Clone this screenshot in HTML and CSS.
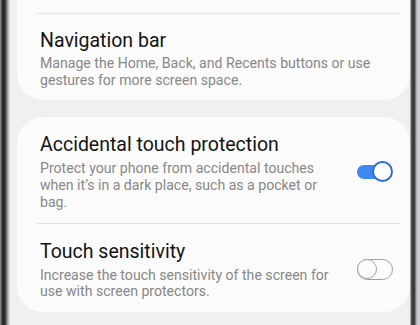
FILE: index.html
```html
<!DOCTYPE html>
<html lang="en">
<head>
<meta charset="utf-8">
<title>Settings</title>
<link rel="stylesheet" href="styles.css">
</head>
<body>
<div class="device">
  <div class="bezel bezel-left"></div>
  <main class="screen">
    <section class="card card-first">
      <div class="divider"></div>
      <div class="row">
        <div class="text">
          <div class="title">Navigation bar</div>
          <div class="desc wide">Manage the Home, Back, and Recents buttons or use gestures for more screen space.</div>
        </div>
      </div>
    </section>
    <section class="card">
      <div class="row">
        <div class="text">
          <div class="title">Accidental touch protection</div>
          <div class="desc">Protect your phone from accidental touches when it’s in a dark place, such as a pocket or bag.</div>
        </div>
        <div class="switch on"><span class="knob"></span></div>
      </div>
      <div class="divider"></div>
      <div class="row">
        <div class="text">
          <div class="title">Touch sensitivity</div>
          <div class="desc">Increase the touch sensitivity of the screen for use with screen protectors.</div>
        </div>
        <div class="switch off"><span class="knob"></span></div>
      </div>
    </section>
  </main>
  <div class="bezel bezel-right"></div>
</div>
</body>
</html>
```

FILE: styles.css
```css
html, body {
  margin: 0;
  padding: 0;
  width: 420px;
  height: 325px;
  overflow: hidden;
  background: #f0f0f0;
  font-family: Roboto, "Noto Sans", sans-serif;
}

.device {
  display: flex;
  height: 325px;
}

.bezel {
  flex: none;
  height: 100%;
}

.bezel-left {
  width: 10px;
  background: linear-gradient(to right, #9a9a9a 0px, #3a3a3a 2px, #1e1e1e 4px, #555 6px, #b5b5b5 8px, #e8e8e8 10px);
}

.bezel-right {
  width: 10px;
  background: linear-gradient(to right, #d8d8dc 0px, #6a6a70 1px, #2a2a30 3px, #50505a 5px, #9c9ca4 6px, #d0d0d4 8px, #c4c4c8 10px);
}

.screen {
  flex: 1;
  display: flex;
  flex-direction: column;
  gap: 17px;
  padding-left: 7px;
  background: #f0f0f0;
}

.card {
  background: #fbfbfb;
  border-radius: 26px;
  display: flex;
  flex-direction: column;
}

.card-first {
  margin-top: -30px;
  padding-top: 43px;
  border-radius: 0 0 26px 26px;
}

.divider {
  height: 1px;
  background: #e4e4e4;
  margin: 0 10px 0 19px;
}

.row {
  display: flex;
  align-items: center;
  padding: 16px 17px 12px 23px;
}

.card-first .row {
  padding-top: 15px;
  padding-bottom: 12px;
}

.card-first .desc {
  margin-top: 2px;
}

.text {
  flex: 1;
  min-width: 0;
}

.title {
  font-size: 19.5px;
  line-height: 24px;
  color: #141414;
}

.desc {
  margin-top: 3px;
  font-size: 14.1px;
  line-height: 16.7px;
  color: #888888;
  max-width: 298px;
}

.desc.wide {
  max-width: 340px;
}

.switch {
  flex: none;
  position: relative;
  width: 36px;
  height: 21px;
  margin-left: 16px;
}

.switch.on::before {
  content: "";
  position: absolute;
  left: 0;
  top: 3.5px;
  width: 30px;
  height: 14px;
  border-radius: 7px;
  background: #3e86f2;
}

.switch.on .knob {
  position: absolute;
  right: 0;
  top: 0;
  width: 17px;
  height: 17px;
  border-radius: 50%;
  background: #ffffff;
  border: 2px solid #2f6fd0;
}

.switch.off {
  box-sizing: border-box;
  border: 1.5px solid #a0a0a0;
  border-radius: 11px;
}

.switch.off .knob {
  position: absolute;
  left: -1.5px;
  top: -1.5px;
  width: 18px;
  height: 18px;
  border-radius: 50%;
  border: 1.5px solid #a0a0a0;
  background: #fbfbfb;
}
```
